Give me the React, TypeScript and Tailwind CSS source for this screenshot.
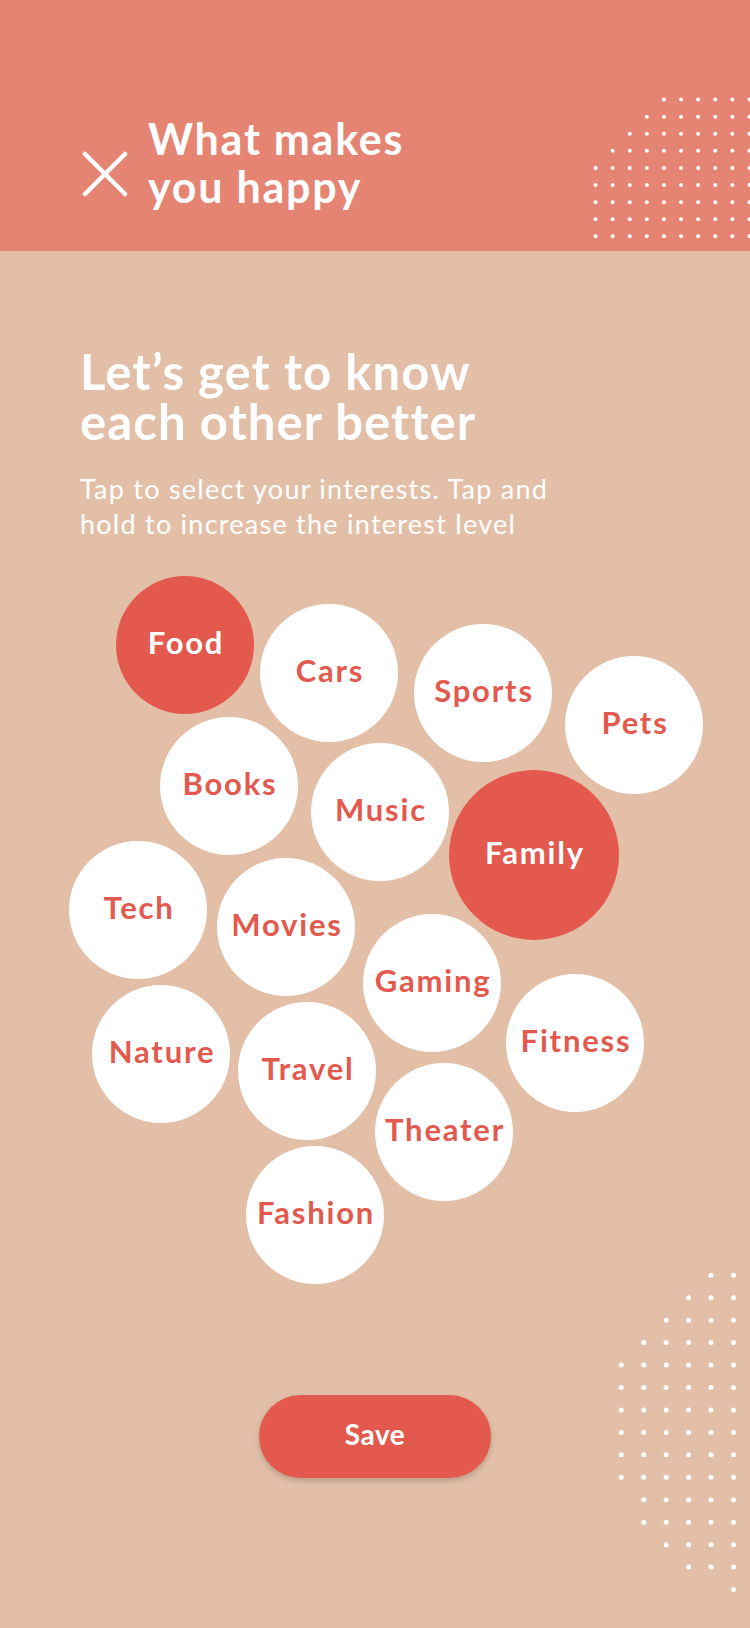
import { useState } from "react";

const bubbles = [
  { label: "Food", left: 116, top: 35, size: 138 },
  { label: "Cars", left: 260, top: 63, size: 138 },
  { label: "Sports", left: 414, top: 83, size: 138 },
  { label: "Pets", left: 565, top: 115, size: 138 },
  { label: "Books", left: 160, top: 176, size: 138 },
  { label: "Music", left: 311, top: 202, size: 138 },
  { label: "Family", left: 449, top: 229, size: 170 },
  { label: "Tech", left: 69, top: 300, size: 138 },
  { label: "Movies", left: 217, top: 317, size: 138 },
  { label: "Gaming", left: 363, top: 373, size: 138 },
  { label: "Fitness", left: 506, top: 433, size: 138 },
  { label: "Nature", left: 92, top: 444, size: 138 },
  { label: "Travel", left: 238, top: 461, size: 138 },
  { label: "Theater", left: 375, top: 522, size: 138 },
  { label: "Fashion", left: 246, top: 605, size: 138 },
];

// first column with a dot on each row
const topRows = [4, 3, 2, 1, 0, 0, 0, 0, 0];
const bottomRows = [4, 3, 2, 1, 0, 0, 0, 0, 0, 0, 1, 1, 2, 3, 5];

const Dots = ({ rows, cols, gap, r }: { rows: number[]; cols: number; gap: number; r: number }) => (
  <svg width={cols * gap} height={rows.length * gap} className="block">
    {rows.map((start, j) =>
      Array.from({ length: cols - start }).map((_, k) => (
        <circle
          key={`${j}-${k}`}
          cx={(start + k) * gap + gap / 2}
          cy={j * gap + gap / 2}
          r={r}
          fill="#fff"
        />
      ))
    )}
  </svg>
);

const App = () => {
  const [selected, setSelected] = useState<string[]>(["Food", "Family"]);

  const toggle = (label: string) =>
    setSelected((s) => (s.includes(label) ? s.filter((x) => x !== label) : [...s, label]));

  return (
    <div className="relative w-full min-h-[1628px] bg-[#E3BFA8] overflow-hidden font-['Lato','Noto_Sans',sans-serif]">
      {/* header */}
      <header className="relative h-[251px] bg-[#E58472] overflow-hidden">
        <div className="absolute left-[587px] top-[91px]">
          <Dots rows={topRows} cols={10} gap={17.1} r={2} />
        </div>
        <div className="relative flex items-start pt-[115px] pl-[82px]">
          <button className="mt-[36px] shrink-0">
            <svg width="46" height="46" viewBox="0 0 46 46" fill="none" stroke="#fff" strokeWidth="4.5" strokeLinecap="round">
              <path d="M3 3 L43 43 M43 3 L3 43" />
            </svg>
          </button>
          <h1 className="ml-[20px] text-white font-bold text-[43px] leading-[48px] tracking-[1.75px]">
            What makes
            <br />
            you happy
          </h1>
        </div>
      </header>

      <section className="pt-[95px] pl-[80px]">
        <h2 className="text-white font-bold text-[49px] leading-[50px] tracking-[1.1px]">
          Let’s get to know
          <br />
          each other better
        </h2>
        <p className="mt-[25px] text-white text-[27px] leading-[35px] tracking-[1.25px]">
          Tap to select your interests. Tap and
          <br />
          hold to increase the interest level
        </p>
      </section>

      {/* bubble cloud */}
      <div className="relative h-[854px]">
        {bubbles.map((b) => {
          const on = selected.includes(b.label);
          return (
            <button
              key={b.label}
              onClick={() => toggle(b.label)}
              style={{ left: b.left, top: b.top, width: b.size, height: b.size }}
              className={`absolute rounded-full flex items-center justify-center pb-[6px] pl-[2px] text-[31px] font-bold tracking-[1.8px] ${
                on ? "bg-[#E4594E] text-white" : "bg-white text-[#E4594E]"
              }`}
            >
              {b.label}
            </button>
          );
        })}
        <div className="absolute left-[610px] top-[723px]">
          <Dots rows={bottomRows} cols={6} gap={22.45} r={2.5} />
        </div>
      </div>

      <div className="flex justify-center pb-[150px]">
        <button className="w-[232px] h-[83px] pb-[5px] rounded-full bg-[#E4594E] text-white font-bold text-[28px] tracking-[0.5px] shadow-[0_3px_6px_rgba(0,0,0,0.18)]">
          Save
        </button>
      </div>
    </div>
  );
};

export default App;
